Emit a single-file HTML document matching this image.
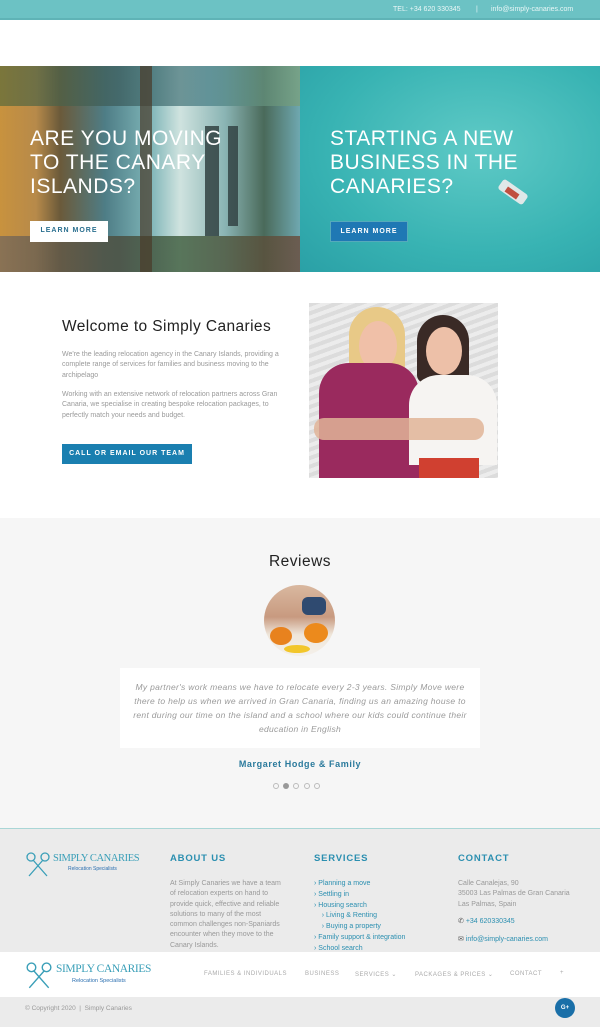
<!DOCTYPE html>
<html><head><meta charset="utf-8"><style>
*{margin:0;padding:0;box-sizing:border-box}
body{width:600px;height:1027px;overflow:hidden;font-family:"Liberation Sans",sans-serif;background:#fff;position:relative}
.a{position:absolute}
.top{left:0;top:0;width:600px;height:20px;background:#6cc2c4;border-bottom:2px solid #5fb3b6;color:#eaf7f7;font-size:7px;line-height:20px}
.h{color:#fff;font-size:21px;line-height:24px;letter-spacing:.5px}
.btn{font-size:7px;font-weight:bold;letter-spacing:1px;text-align:center;line-height:20px}
.p{font-size:7px;color:#9a9a9a;line-height:10.3px}
.fh{font-size:9.5px;font-weight:bold;color:#2b8fb0;letter-spacing:.8px}
.ft{font-size:7px;color:#999;line-height:10.3px}
.lk{font-size:7px;color:#2b8fb0;line-height:10.8px}
.nav{font-size:6px;color:#aaa;letter-spacing:.5px;white-space:nowrap}
.lg{font-family:'Liberation Serif',serif;color:#3a9fb8;letter-spacing:-.4px;white-space:nowrap}
</style></head><body>
<div class="a top"><span class="a" style="left:393px">TEL: +34 620 330345</span><span class="a" style="left:476px">|</span><span class="a" style="left:491px">info@simply-canaries.com</span></div>

<div class="a" style="left:0;top:66px;width:300px;height:206px;background:linear-gradient(90deg,#c8923e 0,#b78a4a 12%,#6b5a3a 20%,#4e7d86 35%,#7db4b7 50%,#cfe3df 60%,#8ab4b4 75%,#4a6a5a 88%,#6fa8b0 100%);overflow:hidden">
 <div class="a" style="left:0;top:0;width:300px;height:40px;background:linear-gradient(90deg,#5a6a3a,#3a5a5a 40%,#467e86 70%,#7aa078);opacity:.7"></div>
 <div class="a" style="left:0;top:170px;width:300px;height:36px;background:linear-gradient(90deg,#7a6a5a,#4a4a3a 40%,#3a5a3a 60%,#6a4a3a);opacity:.8"></div>
 <div class="a" style="left:140px;top:0;width:12px;height:206px;background:#4a3a2a;opacity:.7"></div>
 <div class="a" style="left:205px;top:60px;width:14px;height:110px;background:#2a3a3a;opacity:.8"></div>
 <div class="a" style="left:228px;top:60px;width:10px;height:100px;background:#2e3d3f;opacity:.8"></div>
</div>
<div class="a h" style="left:30px;top:127px">ARE YOU MOVING<br>TO THE CANARY<br>ISLANDS?</div>
<div class="a btn" style="left:30px;top:221px;width:78px;height:21px;background:#fff;color:#2a6f8f">LEARN MORE</div>

<div class="a" style="left:300px;top:66px;width:300px;height:206px;background:radial-gradient(ellipse at 60% 40%,#5fcac6,#38b3b3 60%,#2aa0a6)"></div>
<div class="a" style="left:498px;top:186px;width:30px;height:12px;background:#e0e8e8;transform:rotate(35deg);border-radius:3px"></div>
<div class="a" style="left:505px;top:190px;width:14px;height:6px;background:#c05040;transform:rotate(35deg)"></div>
<div class="a h" style="left:330px;top:127px">STARTING A NEW<br>BUSINESS IN THE<br>CANARIES?</div>
<div class="a btn" style="left:330px;top:221px;width:78px;height:21px;background:#1f78b4;color:#fff;border:1px solid #5ab">LEARN MORE</div>

<div class="a" style="left:62px;top:318px;font-size:15.5px;color:#222;letter-spacing:.4px">Welcome to Simply Canaries</div>
<div class="a p" style="left:62px;top:350px;width:228px">We're the leading relocation agency in the Canary Islands, providing a complete range of services for families and business moving to the archipelago</div>
<div class="a p" style="left:62px;top:390px;width:228px">Working with an extensive network of relocation partners across Gran Canaria, we specialise in creating bespoke relocation packages, to perfectly match your needs and budget.</div>
<div class="a btn" style="left:62px;top:444px;width:130px;height:20px;background:#1a7fb0;color:#fff">CALL OR EMAIL OUR TEAM</div>

<div class="a" style="left:309px;top:303px;width:189px;height:175px;background:repeating-linear-gradient(160deg,#dcdcdc 0 4px,#ececec 4px 8px);overflow:hidden">
 <div class="a" style="left:40px;top:4px;width:56px;height:70px;border-radius:28px 28px 10px 10px;background:#e8c987"></div>
 <div class="a" style="left:50px;top:18px;width:38px;height:50px;border-radius:50%;background:#f0c0a8"></div>
 <div class="a" style="left:10px;top:60px;width:100px;height:115px;border-radius:30px 30px 0 0;background:#9a2a5e"></div>
 <div class="a" style="left:108px;top:12px;width:52px;height:68px;border-radius:26px 26px 8px 8px;background:#3a2a26"></div>
 <div class="a" style="left:117px;top:24px;width:36px;height:48px;border-radius:50%;background:#edc0a8"></div>
 <div class="a" style="left:100px;top:72px;width:88px;height:90px;border-radius:30px 30px 0 0;background:#f6f4f2"></div>
 <div class="a" style="left:110px;top:155px;width:60px;height:20px;background:#d04030"></div>
 <div class="a" style="left:5px;top:115px;width:170px;height:22px;border-radius:10px;background:#e0b498;opacity:.85"></div>
</div>

<div class="a" style="left:0;top:518px;width:600px;height:310px;background:#f6f6f6"></div>
<div class="a" style="left:0;top:553px;width:600px;text-align:center;font-size:15.5px;color:#222;letter-spacing:.5px">Reviews</div>
<div class="a" style="left:264px;top:585px;width:71px;height:71px;border-radius:50%;overflow:hidden;background:linear-gradient(180deg,#d9b8a0 0,#c89a80 45%,#efe6da 70%,#f4f0ea)">
 <div class="a" style="left:6px;top:42px;width:22px;height:18px;border-radius:50%;background:#e8821e"></div>
 <div class="a" style="left:40px;top:38px;width:24px;height:20px;border-radius:50%;background:#ec8a1c"></div>
 <div class="a" style="left:20px;top:60px;width:26px;height:8px;border-radius:50%;background:#f2c62a"></div>
 <div class="a" style="left:38px;top:12px;width:24px;height:18px;background:#2f4a70;border-radius:6px"></div>
</div>
<div class="a" style="left:120px;top:668px;width:360px;height:80px;background:#fff"></div>
<div class="a" style="left:125px;top:680px;width:350px;text-align:center;font-size:8.5px;line-height:14px;color:#9a9a9a;font-style:italic;letter-spacing:.3px">My partner's work means we have to relocate every 2-3 years. Simply Move were there to help us when we arrived in Gran Canaria, finding us an amazing house to rent during our time on the island and a school where our kids could continue their education in English</div>
<div class="a" style="left:0;top:759px;width:600px;text-align:center;font-size:9px;font-weight:bold;color:#2a7a9c;letter-spacing:.6px">Margaret Hodge &amp; Family</div>
<div class="a" style="left:273px;top:783px;width:60px;height:8px">
 <span class="a" style="left:0;width:6px;height:6px;border:1px solid #bbb;border-radius:50%"></span>
 <span class="a" style="left:10px;width:6px;height:6px;background:#999;border-radius:50%"></span>
 <span class="a" style="left:20px;width:6px;height:6px;border:1px solid #bbb;border-radius:50%"></span>
 <span class="a" style="left:31px;width:6px;height:6px;border:1px solid #bbb;border-radius:50%"></span>
 <span class="a" style="left:41px;width:6px;height:6px;border:1px solid #bbb;border-radius:50%"></span>
</div>

<div class="a" style="left:0;top:828px;width:600px;height:124px;background:#ebebeb;border-top:1px solid #a9d6d6"></div>
<svg class="a" style="left:25px;top:852px" width="26" height="26" viewBox="0 0 26 26" fill="none" stroke="#3a9fb8" stroke-width="1.3"><circle cx="6" cy="5" r="4"/><circle cx="20" cy="5" r="4"/><path d="M8 8 L22 24 M18 8 L4 24"/></svg>
<div class="a lg" style="left:53px;top:853px;font-size:10.5px">SIMPLY CANARIES</div>
<div class="a" style="left:68px;top:866px;font-size:5px;color:#2b6fb0">Relocation Specialists</div>

<div class="a fh" style="left:170px;top:853px">ABOUT US</div>
<div class="a ft" style="left:170px;top:879px;width:118px">At Simply Canaries we have a team of relocation experts on hand to provide quick, effective and reliable solutions to many of the most common challenges non-Spaniards encounter when they move to the Canary Islands.</div>
<div class="a fh" style="left:314px;top:853px">SERVICES</div>
<div class="a lk" style="left:314px;top:879px">› Planning a move<br>› Settling in<br>› Housing search<br>&nbsp;&nbsp;&nbsp;&nbsp;› Living &amp; Renting<br>&nbsp;&nbsp;&nbsp;&nbsp;› Buying a property<br>› Family support &amp; integration<br>› School search</div>
<div class="a fh" style="left:458px;top:853px">CONTACT</div>
<div class="a ft" style="left:458px;top:879px">Calle Canalejas, 90<br>35003 Las Palmas de Gran Canaria<br>Las Palmas, Spain</div>
<div class="a lk" style="left:458px;top:917px"><span style="color:#555">✆</span> +34 620330345</div>
<div class="a lk" style="left:458px;top:935px"><span style="color:#555">✉</span> info@simply-canaries.com</div>

<div class="a" style="left:0;top:952px;width:600px;height:45px;background:#fff"></div>
<svg class="a" style="left:25px;top:962px" width="28" height="28" viewBox="0 0 26 26" fill="none" stroke="#3a9fb8" stroke-width="1.3"><circle cx="6" cy="5" r="4"/><circle cx="20" cy="5" r="4"/><path d="M8 8 L22 24 M18 8 L4 24"/></svg>
<div class="a lg" style="left:56px;top:963px;font-size:11.5px">SIMPLY CANARIES</div>
<div class="a" style="left:72px;top:978px;font-size:5.5px;color:#2b6fb0">Relocation Specialists</div>
<div class="a nav" style="left:204px;top:971px">FAMILIES &amp; INDIVIDUALS</div>
<div class="a nav" style="left:305px;top:971px">BUSINESS</div>
<div class="a nav" style="left:355px;top:971px">SERVICES ⌄</div>
<div class="a nav" style="left:415px;top:971px">PACKAGES &amp; PRICES ⌄</div>
<div class="a nav" style="left:510px;top:971px">CONTACT</div>
<div class="a nav" style="left:560px;top:970px">+</div>

<div class="a" style="left:0;top:997px;width:600px;height:30px;background:#ebebeb"></div>
<div class="a" style="left:25px;top:1005px;font-size:6.5px;color:#999">© Copyright 2020 &nbsp;| &nbsp;Simply Canaries</div>
<div class="a" style="left:555px;top:998px;width:20px;height:20px;border-radius:50%;background:#1a6fa8;color:#fff;font-size:6px;font-weight:bold;text-align:center;line-height:20px">G+</div>
</body></html>
